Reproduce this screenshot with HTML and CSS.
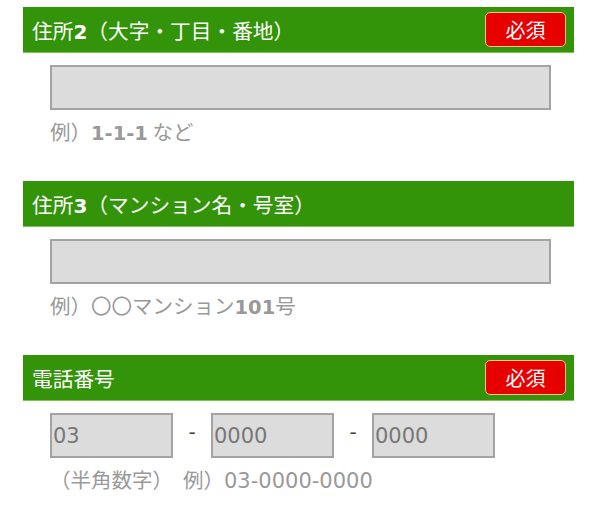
FILE: index.html
```html
<!DOCTYPE html>
<html lang="ja">
<head>
  <meta charset="UTF-8">
  <title>お客様情報</title>
  <link rel="stylesheet" href="styles.css">
</head>
<body>
  <div class="form">
    <div class="field">
      <div class="field-head">
        <span class="field-title">住所<b>2</b>（大字・丁目・番地）</span>
        <span class="required">必須</span>
      </div>
      <div class="field-body">
        <input type="text" class="text-input">
        <p class="hint">例）<b>1-1-1</b> など</p>
      </div>
    </div>

    <div class="field">
      <div class="field-head">
        <span class="field-title">住所<b>3</b>（マンション名・号室）</span>
      </div>
      <div class="field-body">
        <input type="text" class="text-input">
        <p class="hint">例）〇〇マンション<b>101</b>号</p>
      </div>
    </div>

    <div class="field">
      <div class="field-head">
        <span class="field-title">電話番号</span>
        <span class="required">必須</span>
      </div>
      <div class="field-body">
        <div class="tel-row">
          <input type="text" class="tel-input" value="03">
          <span class="dash">-</span>
          <input type="text" class="tel-input" value="0000">
          <span class="dash">-</span>
          <input type="text" class="tel-input" value="0000">
        </div>
        <p class="hint"><span class="note">（半角数字）</span>例）<span class="num">03-0000-0000</span></p>
      </div>
    </div>
  </div>
</body>
</html>
```

FILE: styles.css
```css
body {
  margin: 0;
  padding: 7px 24px 0 23px;
  background: #fff;
  font-family: "Noto Sans CJK JP", "Noto Sans", sans-serif;
}
.form {
  display: flex;
  flex-direction: column;
  gap: 36px;
}
.field-head {
  height: 45px;
  background: #33940a;
  border-bottom: 1px solid #7cc35a;
  display: flex;
  align-items: center;
  justify-content: space-between;
  padding: 0 8px 0 9px;
}
.field-title {
  color: #fff;
  font-size: 20.7px;
}
.field-title b {
  font-family: "DejaVu Sans", sans-serif;
  font-weight: bold;
  font-size: 20px;
}
.required {
  width: 79px;
  height: 33px;
  background: #e60000;
  border: 1px solid #f2c48a;
  border-radius: 5px;
  color: #fff;
  font-size: 20px;
  display: flex;
  align-items: center;
  justify-content: center;
}
.field-body {
  padding: 12px 0 0 27px;
}
.text-input,
.tel-input {
  display: block;
  box-sizing: border-box;
  height: 45px;
  background: #dcdcdc;
  border: 2px solid #a3a3a3;
  margin: 0;
  padding: 0 1px;
  font-family: "DejaVu Sans", sans-serif;
  font-size: 21px;
  color: #777;
}
.text-input {
  width: 501px;
}
.tel-row {
  display: flex;
  align-items: center;
}
.tel-input {
  width: 123px;
}
.dash {
  width: 38px;
  text-align: center;
  font-family: "DejaVu Sans", sans-serif;
  font-size: 20px;
  color: #444;
  padding-bottom: 8px;
}
.hint {
  margin: 7px 0 0 0;
  color: #999;
  font-size: 20.5px;
  line-height: 28px;
}
.hint b,
.hint .num {
  font-family: "DejaVu Sans", sans-serif;
  line-height: 1;
}
.hint b {
  font-weight: bold;
  font-size: 19.5px;
}
.hint .num {
  font-size: 21px;
}
.note {
  margin-left: 0;
  margin-right: 10px;
}
```
